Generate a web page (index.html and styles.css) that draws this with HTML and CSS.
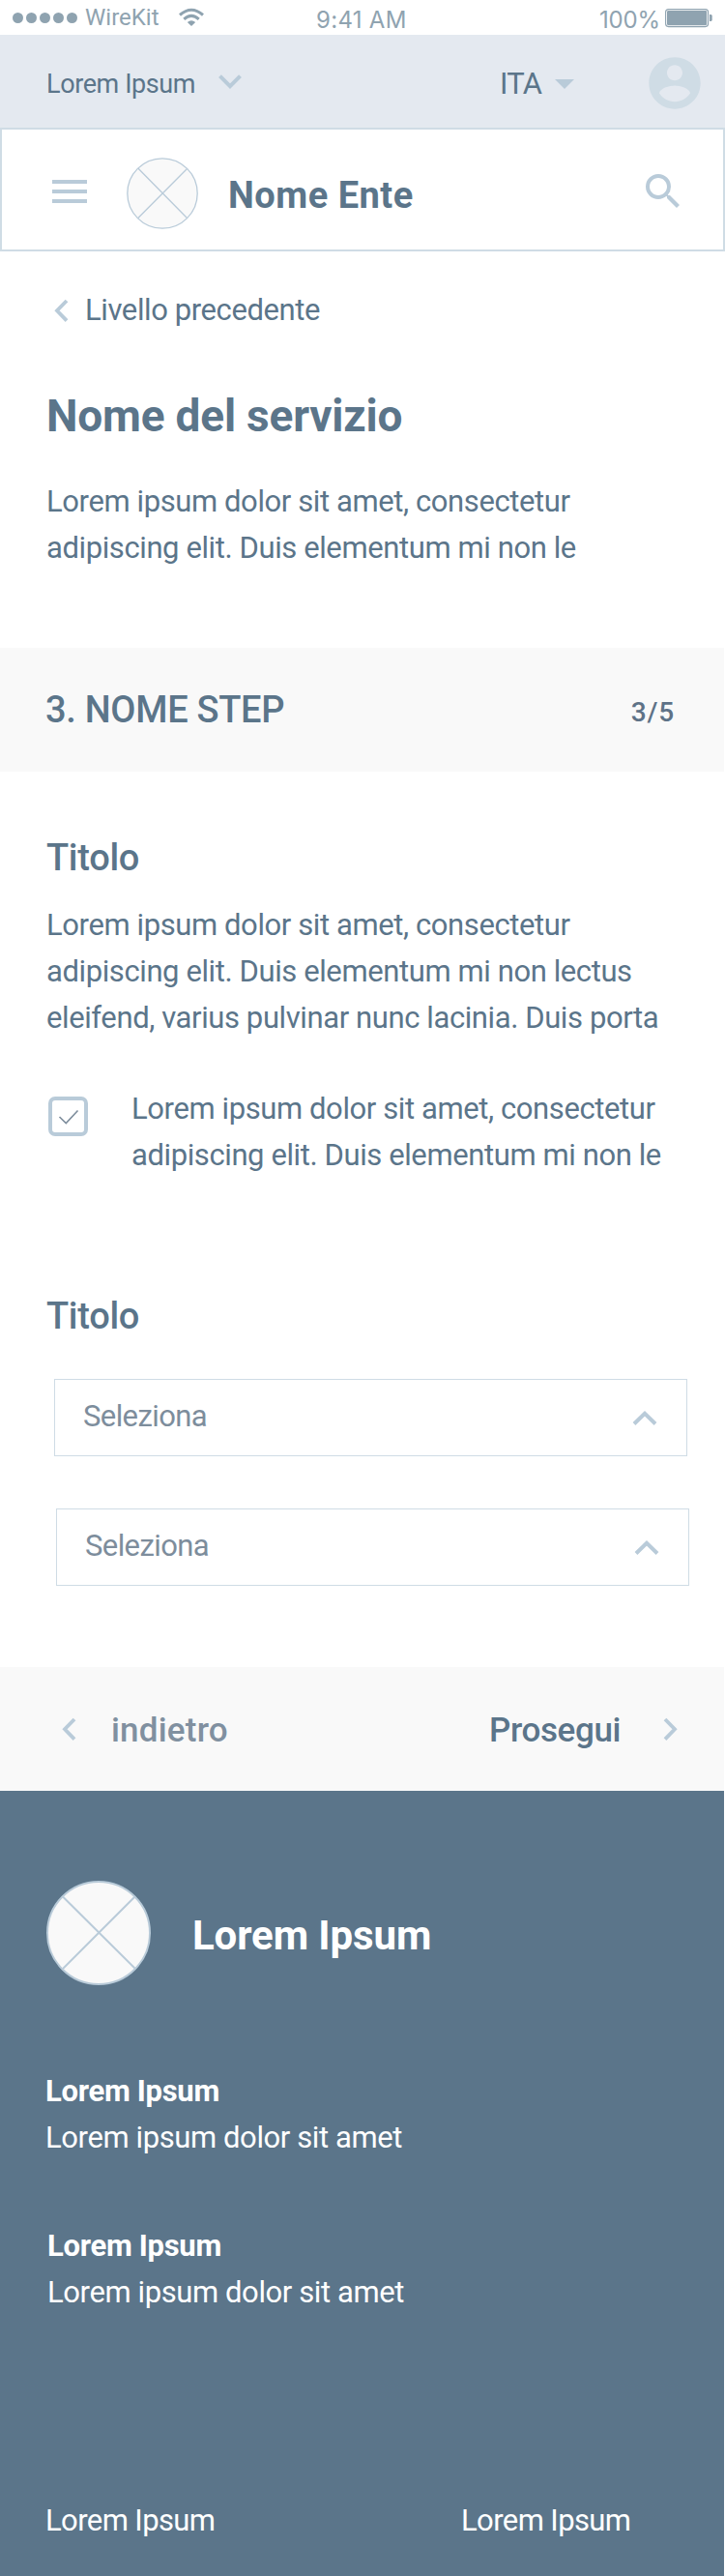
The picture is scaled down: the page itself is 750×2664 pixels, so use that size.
FILE: index.html
```html
<!DOCTYPE html>
<html lang="it">
<head>
<meta charset="utf-8">
<title>Nome Ente</title>
<link rel="stylesheet" href="styles.css">
</head>
<body>
<div class="status">
  <div class="signal"><i></i><i></i><i></i><i></i><i></i></div>
  <span class="carrier">WireKit</span>
  <svg class="wifi" width="28" height="20" viewBox="0 0 28 20"><path d="M2 7.5Q14-3 26 7.5M6.3 11.8Q14 5 21.7 11.8" fill="none" stroke="#8fa3b0" stroke-width="3"/><path d="M9.8 15Q14 11.4 18.2 15L14 19Z" fill="#8fa3b0"/></svg>
  <span class="clock">9:41 AM</span>
  <span class="percent">100%</span>
  <svg class="battery" width="50" height="20" viewBox="0 0 50 20"><rect x=".6" y=".6" width="44" height="18" rx="3" fill="none" stroke="#8fa3b0" stroke-width="1.1"/><rect x="2" y="2" width="41.2" height="15.2" rx="1.4" fill="#8fa3b0"/><path d="M46 6h1.5q1.2.3 1.2 1.5v4q0 1.300-1.200 1.500H46z" fill="#8fa3b0"/></svg>
</div>

<div class="topbar">
  <span class="owner">Lorem Ipsum</span>
  <svg class="down" width="24" height="16" viewBox="0 0 24 16"><path d="M1.500 1.700L12 12.200L22.500 1.700" fill="none" stroke="#b9cbd9" stroke-width="4"/></svg>
  <span class="lang">ITA</span>
  <svg class="caret" width="20" height="10" viewBox="0 0 20 10"><path d="M0 0h20L10 10z" fill="#b9cbd9"/></svg>
  <svg class="avatar" width="64" height="64" viewBox="0 0 24 24"><path fill="#cfdce5" d="M12 2C6.480 2 2 6.480 2 12s4.480 10 10 10 10-4.480 10-10S17.520 2 12 2zm0 3c1.660 0 3 1.340 3 3s-1.340 3-3 3-3-1.340-3-3 1.340-3 3-3zm0 14.200c-2.500 0-4.710-1.280-6-3.220.030-1.990 4-3.080 6-3.080 1.990 0 5.970 1.090 6 3.080-1.290 1.940-3.500 3.220-6 3.220z"/></svg>
</div>

<header class="header">
  <svg width="36" height="24" viewBox="0 0 36 24" fill="#b9cbd9"><path d="M0 0h36v4H0zM0 10h36v4H0zM0 20h36v4H0z"/></svg>
  <svg class="logo" width="74" height="74" viewBox="0 0 74 74"><g fill="#f9f9f9" stroke="#b9cbd9" stroke-width="1.300"><circle cx="37" cy="37" r="36.200"/><path d="M11.800 11L62.500 62.500M62.500 11.500L11.800 62.500"/></g></svg>
  <span class="entity">Nome Ente</span>
  <svg class="search" width="48" height="48" viewBox="0 0 24 24"><path fill="#b9cbd9" d="M15.500 14h-.790l-.280-.270A6.471 6.471 0 0 0 16 9.500 6.500 6.500 0 1 0 9.500 16c1.610 0 3.090-.590 4.230-1.570l.270.280v.790l5 4.990L20.490 19l-4.990-5zm-6 0C7.010 14 5 11.990 5 9.500S7.010 5 9.500 5 14 7.010 14 9.500 11.990 14 9.500 14z"/></svg>
</header>

<section class="intro">
  <a class="back"><svg width="15" height="25" viewBox="0 0 15 25"><path d="M13 2L3 12.300L13 22.600" fill="none" stroke="#b9cbd9" stroke-width="3.800"/></svg><span>Livello precedente</span></a>
  <h1>Nome del servizio</h1>
  <p>Lorem ipsum dolor sit amet, consectetur<br>adipiscing elit. Duis elementum mi non le</p>
</section>

<div class="step"><h2>3. NOME STEP</h2><span class="count">3/5</span></div>

<main class="form">
  <h3>Titolo</h3>
  <p>Lorem ipsum dolor sit amet, consectetur<br>adipiscing elit. Duis elementum mi non lectus<br>eleifend, varius pulvinar nunc lacinia. Duis porta</p>
  <label class="check">
    <span class="box"><svg width="22" height="16" viewBox="0 0 22 16"><path d="M1.500 8L8.300 14.500L20.500 1.500" fill="none" stroke="#7d8d9c" stroke-width="1.600"/></svg></span>
    <span>Lorem ipsum dolor sit amet, consectetur<br>adipiscing elit. Duis elementum mi non le</span>
  </label>
  <h3 class="second">Titolo</h3>
  <div class="select"><span>Seleziona</span><svg width="26" height="16" viewBox="0 0 26 16"><path d="M2 13.500L13 2.900L24 13.500" fill="none" stroke="#b9cbd9" stroke-width="4"/></svg></div>
  <div class="select shifted"><span>Seleziona</span><svg width="26" height="16" viewBox="0 0 26 16"><path d="M2 13.500L13 2.900L24 13.500" fill="none" stroke="#b9cbd9" stroke-width="4"/></svg></div>
</main>

<nav class="pager">
  <svg width="15" height="25" viewBox="0 0 15 25"><path d="M13 2L3 12.300L13 22.600" fill="none" stroke="#b9cbd9" stroke-width="3.800"/></svg>
  <span class="prev">indietro</span>
  <span class="next">Prosegui</span>
  <svg width="15" height="25" viewBox="0 0 15 25"><path d="M2 2L12 12.300L2 22.600" fill="none" stroke="#b9cbd9" stroke-width="3.800"/></svg>
</nav>

<footer class="footer">
  <div class="brand">
    <svg width="108" height="108" viewBox="0 0 108 108"><g fill="#f9f9f9" stroke="#b9cbd9" stroke-width="2"><circle cx="54" cy="54" r="53"/><path d="M17 16.500L92 91M91.500 16.500L17 91"/></g></svg>
    <span>Lorem Ipsum</span>
  </div>
  <div class="group"><strong>Lorem Ipsum</strong><span>Lorem ipsum dolor sit amet</span></div>
  <div class="group inset"><strong>Lorem Ipsum</strong><span>Lorem ipsum dolor sit amet</span></div>
  <div class="links"><span>Lorem Ipsum</span><span>Lorem Ipsum</span></div>
</footer>
</body>
</html>
```

FILE: styles.css
```css
* { box-sizing: border-box; margin: 0; padding: 0; }
svg { display: block; flex: none; }
body {
  width: 750px;
  background: #fff;
  color: #5b758a;
  font: 400 31px/48px Roboto, "Liberation Sans", sans-serif;
  letter-spacing: -0.4px;
  white-space: nowrap;
}

.status { display: flex; height: 36px; color: #8fa3b0; font: 400 24px/36px Inter, sans-serif; letter-spacing: 0.3px; }
.signal { display: flex; gap: 3px; padding: 13px 0 0 13px; width: 88px; }
.signal i { width: 11px; height: 11px; border-radius: 50%; background: #8fa3b0; }
.carrier { width: 96px; line-height: 37px; font-family: Roboto, sans-serif; letter-spacing: 0; }
.wifi { margin-top: 8px; }
.clock { margin-left: 115px; width: 293px; line-height: 41px; }
.percent { width: 68px; line-height: 41px; letter-spacing: -0.2px; }
.battery { margin-top: 9px; }

.topbar { display: flex; align-items: center; height: 96px; background: #e4e9f0; padding: 0 20px 0 48px; }
.owner { padding-top: 5px; font-size: 27px; width: 178px; }
.down { margin-top: 2px; }
.lang { width: 56px; margin-left: 267px; padding-top: 5px; letter-spacing: -0.8px; }
.caret { margin: 6px 0 0 1px; }
.avatar { margin: 4px 0 0 auto; }

.header { display: flex; align-items: center; height: 128px; border: 2px solid #cfdce5; padding: 0 38px 0 52px; }
.logo { margin: 8px 0 0 41px; }
.header > svg:first-child { margin-top: 4px; }
.entity { margin: 11px 0 0 31px; font-size: 38px; font-weight: 700; letter-spacing: 0.5px; }
.search { margin: 4px 0 0 auto; }

.intro { height: 410px; padding: 37px 48px 0; }
.back { display: flex; align-items: center; padding-left: 8px; gap: 17px; }
h1 { margin: 55px 0 35px; font-size: 46px; line-height: 60px; font-weight: 700; letter-spacing: -0.2px; }

.step { display: flex; align-items: center; justify-content: space-between; width: 749px; height: 128px; padding: 0 51px 0 47px; background: #f9f9f9; }
h2, h3 { font-size: 38px; font-weight: 500; letter-spacing: -0.3px; }
.count { padding-top: 5px; font-size: 28px; font-weight: 500; color: #5e7287; letter-spacing: 0.8px; }

.form { padding: 65px 48px 84px; }
.form p { margin-top: 22px; }
.check { display: flex; gap: 45px; margin-top: 46px; }
.box { display: grid; place-items: center; width: 41px; height: 41px; margin: 11px 0 0 2px; border: 4px solid #b9cbd9; border-radius: 7px; }
.second { margin-top: 118px; }
.select { display: flex; align-items: center; justify-content: space-between; width: 655px; height: 80px; margin: 41px 0 0 8px; padding: 0 30px 2px 29px; border: 1px solid #cfdce5; color: #7d8d9c; }
.select span { letter-spacing: -0.6px; }
.select svg { margin-top: 4px; }
.shifted { margin: 54px 0 0 10px; }

.pager { display: flex; align-items: center; width: 749px; height: 128px; padding: 0 48px 0 64px; background: #f9f9f9; font-size: 35px; font-weight: 500; }
.prev { margin: 4px 0 0 36px; color: #8090a0; letter-spacing: 0.2px; }
.next { margin: 4px 44px 0 auto; letter-spacing: -0.4px; }

.footer { width: 749px; height: 812px; padding: 93px 48px 0 47px; background: #5b758a; color: #fff; }
.brand { display: flex; align-items: center; gap: 43px; padding-left: 1px; font-size: 42px; font-weight: 700; letter-spacing: -0.1px; }
.brand span { padding-top: 5px; }
.group { display: grid; margin-top: 86px; }
.group strong { font-weight: 700; letter-spacing: -0.3px; }
.inset { margin: 64px 0 0 2px; }
.links { display: grid; grid-template-columns: 430px 1fr; margin-top: 188px; letter-spacing: -0.6px; }
```
